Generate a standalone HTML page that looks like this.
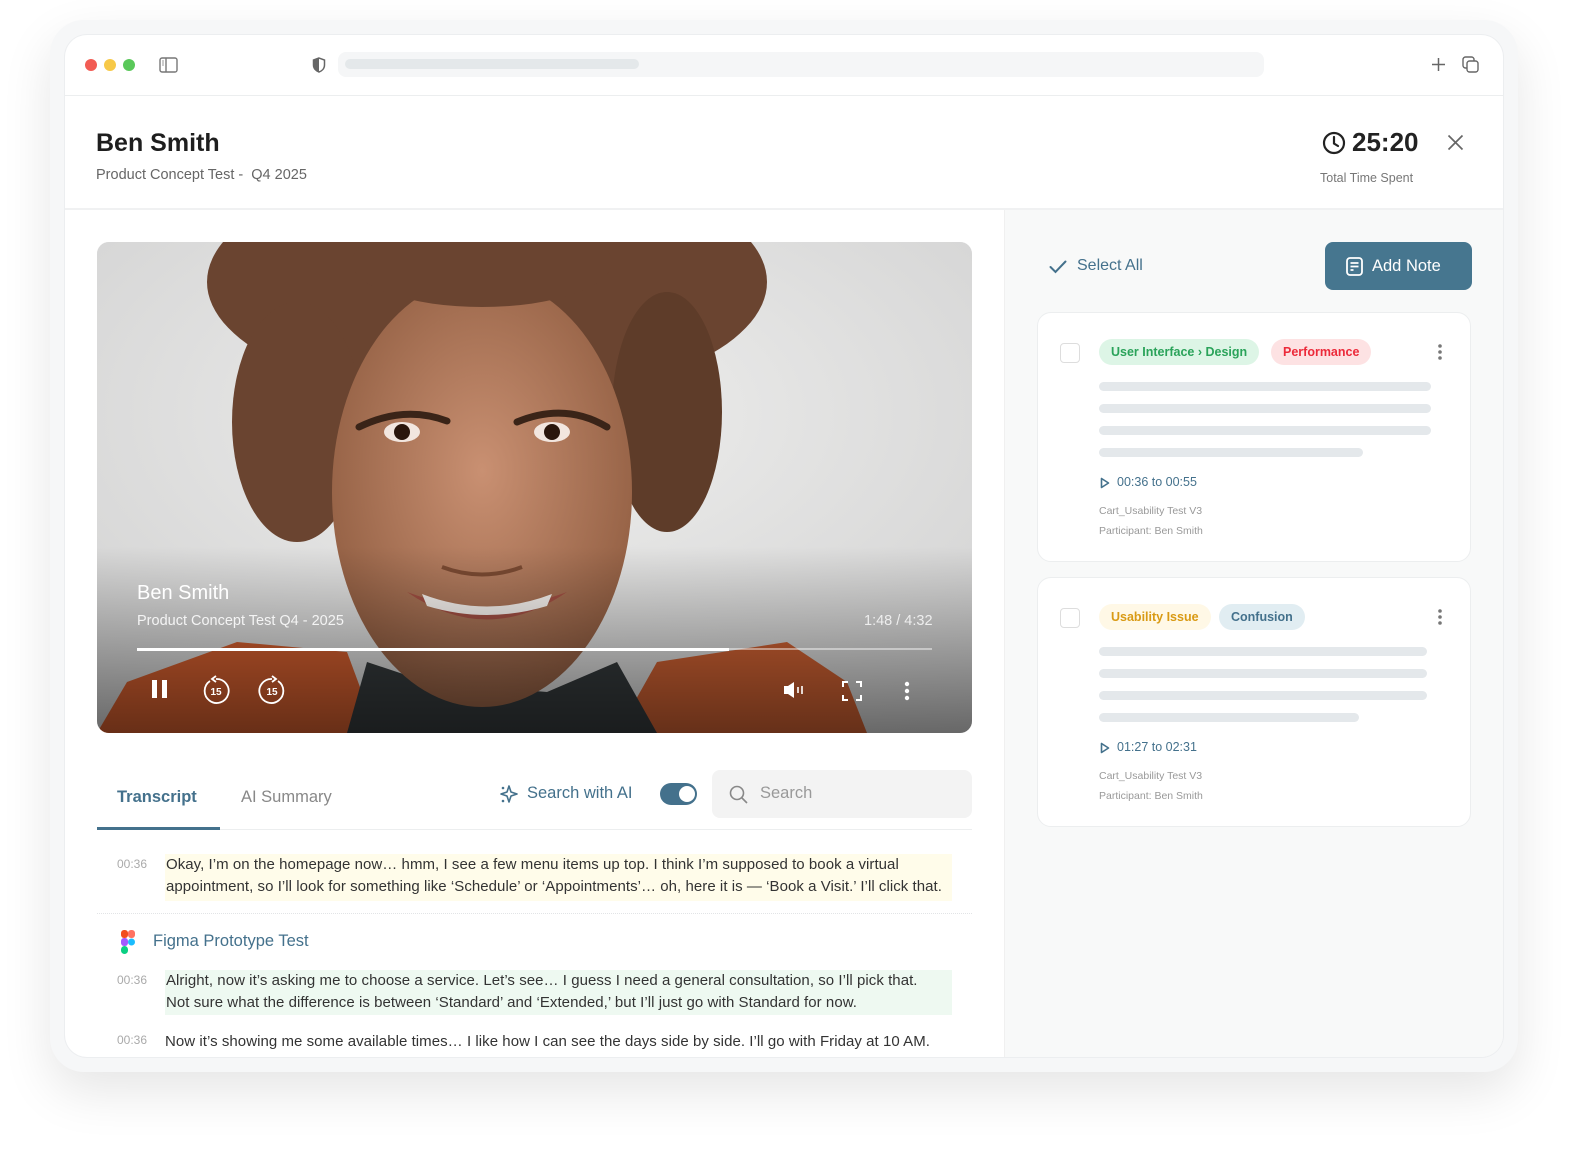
<!DOCTYPE html>
<html><head><meta charset="utf-8"><style>
*{margin:0;padding:0;box-sizing:border-box}
body{width:1588px;height:1167px;background:#fff;font-family:"Liberation Sans",sans-serif;position:relative;overflow:hidden;color:#222}
.a{position:absolute}
.outer{left:50px;top:20px;width:1468px;height:1052px;border-radius:34px;background:#f6f7f8;box-shadow:0 20px 50px rgba(0,0,0,.10)}
.win{left:65px;top:35px;width:1438px;height:1022px;border-radius:22px;background:#fff;overflow:hidden;box-shadow:0 0 0 1px #eceef0}
.dot{width:12px;height:12px;border-radius:50%;top:24px}
.tag{height:26px;border-radius:13px;font-size:12.5px;font-weight:bold;line-height:26px;padding:0 12px;top:26px}
.bar{height:9px;border-radius:5px;background:#e4e8eb}
.card{width:434px;height:250px;background:#fff;border:1px solid #eceeef;border-radius:14px;left:32px}
.cb{left:22px;top:30px;width:20px;height:20px;border:1.5px solid #ddd;border-radius:4px}
.meta{font-size:10.5px;color:#999;left:61px}
.ts{font-size:12px;color:#aaa}
.tx{font-size:15px;color:#333;line-height:22px;letter-spacing:.05px}
</style></head><body>
<div class="a outer"></div>
<div class="a win">
  <div class="a dot" style="left:20px;background:#f25c54"></div>
  <div class="a dot" style="left:39px;background:#f7c948"></div>
  <div class="a dot" style="left:58px;background:#5ac85a"></div>
  <svg class="a" style="left:94px;top:22px" width="19" height="16" viewBox="0 0 19 16"><rect x="1" y="1" width="17" height="14" rx="2" fill="none" stroke="#777" stroke-width="1.4"/><line x1="7" y1="1" x2="7" y2="15" stroke="#777" stroke-width="1.4"/><line x1="3" y1="4" x2="5" y2="4" stroke="#999"/><line x1="3" y1="6" x2="5" y2="6" stroke="#999"/><line x1="3" y1="8" x2="5" y2="8" stroke="#999"/></svg>
  <svg class="a" style="left:247px;top:22px" width="14" height="16" viewBox="0 0 14 16"><path d="M7 1L1.5 3v5c0 3.5 2.5 6 5.5 7 3-1 5.5-3.5 5.5-7V3z" fill="none" stroke="#666" stroke-width="1.5"/><path d="M7 1L1.5 3v5c0 3.5 2.5 6 5.5 7z" fill="#666"/></svg>
  <div class="a" style="left:273px;top:17px;width:926px;height:25px;border-radius:8px;background:#f5f6f7"></div>
  <div class="a" style="left:280px;top:24px;width:294px;height:10px;border-radius:5px;background:#e4e8ea"></div>
  <svg class="a" style="left:1366px;top:22px" width="15" height="15"><path d="M7.5 1v13M1 7.5h13" stroke="#666" stroke-width="1.5"/></svg>
  <svg class="a" style="left:1397px;top:21px" width="18" height="18"><rect x="1" y="1" width="11" height="11" rx="2.5" fill="none" stroke="#666" stroke-width="1.4"/><rect x="5" y="5" width="11" height="11" rx="2.5" fill="#fff" stroke="#666" stroke-width="1.4"/></svg>
  <div class="a" style="left:0;top:60px;width:1438px;height:1px;background:#eceeef"></div>
  <div class="a" style="left:31px;top:94px;font-size:25px;font-weight:bold;color:#1e1e1e">Ben Smith</div>
  <div class="a" style="left:31px;top:132px;font-size:14.5px;color:#666">Product Concept Test -&nbsp; Q4 2025</div>
  <svg class="a" style="left:1257px;top:96px" width="24" height="24" viewBox="0 0 24 24"><circle cx="12" cy="12" r="10" fill="none" stroke="#222" stroke-width="2.2"/><path d="M12 6v6.5l4 2.5" fill="none" stroke="#222" stroke-width="2.2" stroke-linecap="round"/></svg>
  <div class="a" style="left:1287px;top:92px;font-size:26px;font-weight:bold;color:#222">25:20</div>
  <div class="a" style="left:1255px;top:136px;font-size:12.5px;color:#777">Total Time Spent</div>
  <svg class="a" style="left:1382px;top:99px" width="17" height="17"><path d="M1.5 1.5l14 14M15.5 1.5l-14 14" stroke="#666" stroke-width="1.7"/></svg>
  <div class="a" style="left:0;top:173px;width:1438px;height:2px;background:#f0f1f2"></div>
  <div class="a" style="left:939px;top:175px;width:499px;height:847px;background:#f8f9f9;border-left:1px solid #f0f0f0">
    <svg class="a" style="left:44px;top:50px" width="18" height="14"><path d="M1.5 7l5 5L16.5 1.5" fill="none" stroke="#44718c" stroke-width="2" stroke-linecap="round"/></svg>
    <div class="a" style="left:72px;top:47px;font-size:16px;color:#44718c">Select All</div>
    <div class="a" style="left:320px;top:32px;width:147px;height:48px;border-radius:8px;background:#46768f;color:#fff;font-size:16.5px;line-height:48px;padding-left:47px">Add Note</div>
    <svg class="a" style="left:341px;top:47px" width="17" height="19"><rect x="1" y="1" width="15" height="17" rx="3" fill="none" stroke="#fff" stroke-width="1.8"/><path d="M4.5 6h8M4.5 9.5h8M4.5 13h3" stroke="#fff" stroke-width="1.8"/></svg>
    <div class="a card" style="top:102px">
      <div class="a cb"></div>
      <div class="a tag" style="left:61px;background:#ddf5e6;color:#2aa35a">User Interface › Design</div>
      <div class="a tag" style="left:233px;background:#fde2e3;color:#ec2a3a">Performance</div>
      <svg class="a" style="left:399px;top:31px" width="6" height="16"><circle cx="3" cy="2" r="1.8" fill="#777"/><circle cx="3" cy="8" r="1.8" fill="#777"/><circle cx="3" cy="14" r="1.8" fill="#777"/></svg>
      <div class="a bar" style="left:61px;top:69px;width:332px"></div>
      <div class="a bar" style="left:61px;top:91px;width:332px"></div>
      <div class="a bar" style="left:61px;top:113px;width:332px"></div>
      <div class="a bar" style="left:61px;top:135px;width:264px"></div>
      <svg class="a" style="left:62px;top:164px" width="10" height="12"><path d="M1.5 1.5v9l7-4.5z" fill="none" stroke="#44718c" stroke-width="1.6" stroke-linejoin="round"/></svg>
      <div class="a" style="left:79px;top:162px;font-size:12.5px;color:#44718c">00:36 to 00:55</div>
      <div class="a meta" style="top:192px">Cart_Usability Test V3</div>
      <div class="a meta" style="top:212px">Participant: Ben Smith</div>
    </div>
    <div class="a card" style="top:367px">
      <div class="a cb"></div>
      <div class="a tag" style="left:61px;background:#fff8e6;color:#d99a14">Usability Issue</div>
      <div class="a tag" style="left:181px;background:#e1edf2;color:#44718c">Confusion</div>
      <svg class="a" style="left:399px;top:31px" width="6" height="16"><circle cx="3" cy="2" r="1.8" fill="#777"/><circle cx="3" cy="8" r="1.8" fill="#777"/><circle cx="3" cy="14" r="1.8" fill="#777"/></svg>
      <div class="a bar" style="left:61px;top:69px;width:328px"></div>
      <div class="a bar" style="left:61px;top:91px;width:328px"></div>
      <div class="a bar" style="left:61px;top:113px;width:328px"></div>
      <div class="a bar" style="left:61px;top:135px;width:260px"></div>
      <svg class="a" style="left:62px;top:164px" width="10" height="12"><path d="M1.5 1.5v9l7-4.5z" fill="none" stroke="#44718c" stroke-width="1.6" stroke-linejoin="round"/></svg>
      <div class="a" style="left:79px;top:162px;font-size:12.5px;color:#44718c">01:27 to 02:31</div>
      <div class="a meta" style="top:192px">Cart_Usability Test V3</div>
      <div class="a meta" style="top:212px">Participant: Ben Smith</div>
    </div>
  </div>
  <div class="a" style="left:32px;top:207px;width:875px;height:491px;border-radius:12px;overflow:hidden;background:#dcdcdc">
    <svg width="875" height="491" viewBox="0 0 875 491">
      <defs>
        <radialGradient id="bg" cx="0.5" cy="0.35" r="0.8"><stop offset="0" stop-color="#efefee"/><stop offset="1" stop-color="#cfcfcf"/></radialGradient>
        <radialGradient id="skin" cx="0.5" cy="0.45" r="0.6"><stop offset="0" stop-color="#c99072"/><stop offset="1" stop-color="#8f5c40"/></radialGradient>
        <linearGradient id="ov" x1="0" y1="0" x2="0" y2="1"><stop offset="0.62" stop-color="#000" stop-opacity="0"/><stop offset="1" stop-color="#000" stop-opacity="0.5"/></linearGradient>
      </defs>
      <rect width="875" height="491" fill="url(#bg)"/>
      <ellipse cx="390" cy="40" rx="280" ry="120" fill="#6a4430"/>
      <ellipse cx="200" cy="180" rx="65" ry="120" fill="#6a4430"/>
      <ellipse cx="570" cy="170" rx="55" ry="120" fill="#5e3c29"/>
      <path d="M0 491L30 440 140 400 250 410 280 491z" fill="#d05d2e"/>
      <path d="M560 420L690 400 750 440 770 491 520 491z" fill="#cc6032"/>
      <path d="M250 491L270 420 330 440 450 450 520 420 560 491z" fill="#34393b"/>
      <ellipse cx="385" cy="250" rx="150" ry="215" fill="url(#skin)"/>
      <ellipse cx="385" cy="20" rx="130" ry="45" fill="#6a4430"/>
      <path d="M262 185q45-22 88-6M420 180q48-20 90 5" stroke="#3a2418" stroke-width="7" fill="none" stroke-linecap="round"/>
      <ellipse cx="305" cy="190" rx="18" ry="10" fill="#f2e6df"/><circle cx="305" cy="190" r="8" fill="#2a160c"/>
      <ellipse cx="455" cy="190" rx="18" ry="10" fill="#f2e6df"/><circle cx="455" cy="190" r="8" fill="#2a160c"/>
      <path d="M345 325q40 15 80 0" stroke="#7a4a32" stroke-width="4" fill="none"/>
      <path d="M310 350q80 55 160 0q-80 30-160 0z" fill="#a04e42"/>
      <path d="M325 352q65 25 130 0l-5 12q-60 18-120 0z" fill="#f6f2ee"/>
      <rect width="875" height="491" fill="url(#ov)"/>
    </svg>
    <div class="a" style="left:40px;top:340px;font-size:20px;color:#fff">Ben Smith</div>
    <div class="a" style="left:40px;top:371px;font-size:14.5px;color:#f4f4f4">Product Concept Test Q4 - 2025</div>
    <div class="a" style="left:767px;top:371px;font-size:14.5px;color:#eee">1:48 / 4:32</div>
    <div class="a" style="left:40px;top:406px;width:795px;height:2px;background:rgba(255,255,255,.45)"></div>
    <div class="a" style="left:40px;top:406px;width:592px;height:3px;background:#fff"></div>
    <svg class="a" style="left:54px;top:437px" width="18" height="20"><rect x="1" y="1" width="5" height="18" fill="#fff"/><rect x="11" y="1" width="5" height="18" fill="#fff"/></svg>
    <svg class="a" style="left:104px;top:433px" width="30" height="30" viewBox="0 0 30 30"><path d="M9 6A12 12 0 1 0 15 4" fill="none" stroke="#fff" stroke-width="1.8"/><path d="M15 1l-4 3 4 3" fill="none" stroke="#fff" stroke-width="1.8"/><text x="15" y="20" font-size="10" font-weight="bold" fill="#fff" text-anchor="middle" font-family="Liberation Sans">15</text></svg>
    <svg class="a" style="left:160px;top:433px" width="30" height="30" viewBox="0 0 30 30"><path d="M21 6A12 12 0 1 1 15 4" fill="none" stroke="#fff" stroke-width="1.8"/><path d="M15 1l4 3-4 3" fill="none" stroke="#fff" stroke-width="1.8"/><text x="15" y="20" font-size="10" font-weight="bold" fill="#fff" text-anchor="middle" font-family="Liberation Sans">15</text></svg>
    <svg class="a" style="left:686px;top:439px" width="26" height="18"><path d="M1 5h4l6-4v16l-6-4H1z" fill="#fff"/><path d="M15 6v6M19 5v8" stroke="#fff" stroke-width="1.6"/></svg>
    <svg class="a" style="left:745px;top:439px" width="20" height="20"><path d="M1 6V1h5M14 1h5v5M19 14v5h-5M6 19H1v-5" fill="none" stroke="#fff" stroke-width="2"/></svg>
    <svg class="a" style="left:807px;top:439px" width="6" height="20"><circle cx="3" cy="3" r="2.2" fill="#fff"/><circle cx="3" cy="10" r="2.2" fill="#fff"/><circle cx="3" cy="17" r="2.2" fill="#fff"/></svg>
  </div>
  <div class="a" style="left:52px;top:753px;font-size:16.5px;font-weight:bold;color:#44718c">Transcript</div>
  <div class="a" style="left:176px;top:753px;font-size:16.5px;color:#888">AI Summary</div>
  <div class="a" style="left:32px;top:794px;width:875px;height:1px;background:#eceeef"></div>
  <div class="a" style="left:32px;top:792px;width:123px;height:3px;background:#44718c"></div>
  <svg class="a" style="left:434px;top:749px" width="20" height="20" viewBox="0 0 20 20"><path d="M10 2l2 6 6 2-6 2-2 6-2-6-6-2 6-2z" fill="none" stroke="#44718c" stroke-width="1.6" stroke-linejoin="round"/><circle cx="4" cy="4" r="1.3" fill="#44718c"/><circle cx="4" cy="17" r="1.3" fill="#44718c"/></svg>
  <div class="a" style="left:462px;top:749px;font-size:16.5px;color:#44718c">Search with AI</div>
  <div class="a" style="left:595px;top:748px;width:37px;height:22px;border-radius:11px;background:#44718c"></div>
  <div class="a" style="left:614px;top:751px;width:16px;height:16px;border-radius:50%;background:#fff"></div>
  <div class="a" style="left:647px;top:735px;width:260px;height:48px;border-radius:8px;background:#f3f3f3"></div>
  <svg class="a" style="left:664px;top:750px" width="19" height="19"><circle cx="8" cy="8" r="6.5" fill="none" stroke="#888" stroke-width="1.6"/><path d="M13 13l5 5" stroke="#888" stroke-width="1.6"/></svg>
  <div class="a" style="left:695px;top:749px;font-size:16.5px;color:#999">Search</div>
  <div class="a ts" style="left:52px;top:822px">00:36</div>
  <div class="a tx" style="left:100px;top:819px;width:787px;height:47px;background:#fffcea;padding-left:1px">Okay, I’m on the homepage now… hmm, I see a few menu items up top. I think I’m supposed to book a virtual appointment, so I’ll look for something like ‘Schedule’ or ‘Appointments’… oh, here it is — ‘Book a Visit.’ I’ll click that.</div>
  <div class="a" style="left:32px;top:878px;width:875px;border-top:1px dotted #e2e4e6"></div>
  <svg class="a" style="left:56px;top:895px" width="14" height="24" viewBox="0 0 14 24"><rect x="0" y="0" width="7" height="8" rx="3" fill="#f24e1e"/><rect x="7" y="0" width="7" height="8" rx="3" fill="#ff7262"/><rect x="0" y="8" width="7" height="8" rx="3" fill="#a259ff"/><circle cx="10.5" cy="12" r="3.5" fill="#1abcfe"/><rect x="0" y="16" width="7" height="8" rx="3.5" fill="#0acf83"/></svg>
  <div class="a" style="left:88px;top:897px;font-size:16.5px;color:#44718c">Figma Prototype Test</div>
  <div class="a ts" style="left:52px;top:938px">00:36</div>
  <div class="a" style="left:100px;top:935px;width:787px;height:45px;background:#eef9f1"></div>
  <div class="a tx" style="left:101px;top:935px;width:770px">Alright, now it’s asking me to choose a service. Let’s see… I guess I need a general consultation, so I’ll pick that. Not sure what the difference is between ‘Standard’ and ‘Extended,’ but I’ll just go with Standard for now.</div>
  <div class="a ts" style="left:52px;top:998px">00:36</div>
  <div class="a tx" style="left:100px;top:996px;width:800px;white-space:nowrap">Now it’s showing me some available times… I like how I can see the days side by side. I’ll go with Friday at 10 AM.</div>
</div>
</body></html>
